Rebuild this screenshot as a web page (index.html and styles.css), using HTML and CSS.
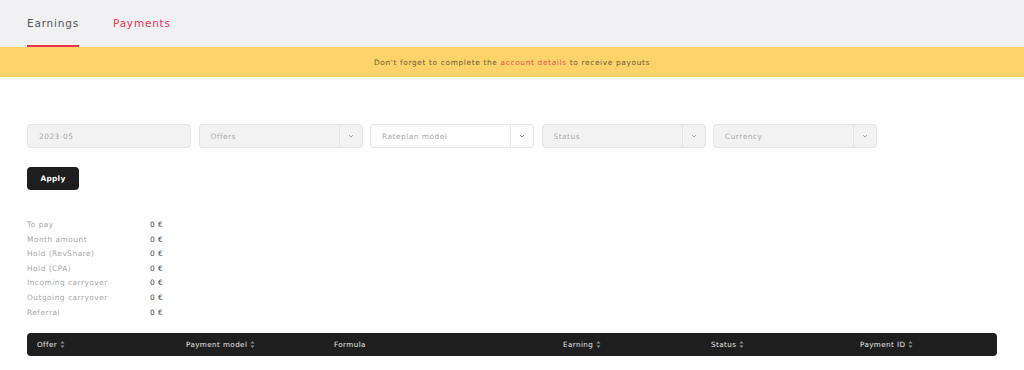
FILE: index.html
```html
<!DOCTYPE html>
<html lang="en">
<head>
  <meta charset="UTF-8" />
  <title>Earnings</title>
  <link rel="stylesheet" href="styles.css">
</head>
<body>

  <nav class="tabs">
    <a class="tab active">Earnings</a>
    <a class="tab">Payments</a>
  </nav>

  <div class="notice">
    Don't forget to complete the <a class="notice-link">account details</a> to receive payouts
  </div>

  <main class="content">
    <div class="filters">
      <div class="field">2023-05</div>
      <div class="field select">
        <span>Offers</span>
        <span class="arrow"><svg width="6" height="4" viewBox="0 0 6 4"><path d="M1 1l2 2 2-2" fill="none" stroke="#999" stroke-width="0.9"/></svg></span>
      </div>
      <div class="field select white">
        <span>Rateplan model</span>
        <span class="arrow"><svg width="6" height="4" viewBox="0 0 6 4"><path d="M1 1l2 2 2-2" fill="none" stroke="#777" stroke-width="0.9"/></svg></span>
      </div>
      <div class="field select">
        <span>Status</span>
        <span class="arrow"><svg width="6" height="4" viewBox="0 0 6 4"><path d="M1 1l2 2 2-2" fill="none" stroke="#999" stroke-width="0.9"/></svg></span>
      </div>
      <div class="field select">
        <span>Currency</span>
        <span class="arrow"><svg width="6" height="4" viewBox="0 0 6 4"><path d="M1 1l2 2 2-2" fill="none" stroke="#999" stroke-width="0.9"/></svg></span>
      </div>
    </div>

    <button class="btn">Apply</button>

    <dl class="summary">
      <dt>To pay</dt><dd>0 €</dd>
      <dt>Month amount</dt><dd>0 €</dd>
      <dt>Hold (RevShare)</dt><dd>0 €</dd>
      <dt>Hold (CPA)</dt><dd>0 €</dd>
      <dt>Incoming carryover</dt><dd>0 €</dd>
      <dt>Outgoing carryover</dt><dd>0 €</dd>
      <dt>Referral</dt><dd>0 €</dd>
    </dl>

    <div class="table-head">
      <span>Offer <svg class="sort" width="5" height="9" viewBox="0 0 5 9"><path d="M2.5 1L4.5 3.5H0.5z M2.5 8L4.5 5.5H0.5z" fill="#8a8a8a"/></svg></span>
      <span>Payment model <svg class="sort" width="5" height="9" viewBox="0 0 5 9"><path d="M2.5 1L4.5 3.5H0.5z M2.5 8L4.5 5.5H0.5z" fill="#8a8a8a"/></svg></span>
      <span>Formula</span>
      <span>Earning <svg class="sort" width="5" height="9" viewBox="0 0 5 9"><path d="M2.5 1L4.5 3.5H0.5z M2.5 8L4.5 5.5H0.5z" fill="#8a8a8a"/></svg></span>
      <span>Status <svg class="sort" width="5" height="9" viewBox="0 0 5 9"><path d="M2.5 1L4.5 3.5H0.5z M2.5 8L4.5 5.5H0.5z" fill="#8a8a8a"/></svg></span>
      <span>Payment ID <svg class="sort" width="5" height="9" viewBox="0 0 5 9"><path d="M2.5 1L4.5 3.5H0.5z M2.5 8L4.5 5.5H0.5z" fill="#8a8a8a"/></svg></span>
    </div>
  </main>

</body>
</html>
```

FILE: styles.css
```css
body {
  margin: 0;
  font-family: "DejaVu Sans", Verdana, sans-serif;
  color: #1e1e1e;
  background: #fff;
}

.tabs {
  display: flex;
  gap: 34px;
  height: 47px;
  padding: 0 27px;
  background: #f1f1f4;
  box-sizing: border-box;
}

.tab {
  display: flex;
  align-items: center;
  height: 45px;
  font-size: 10.5px;
  letter-spacing: 0.8px;
  border-bottom: 2px solid transparent;
}

.tab.active {
  color: #555;
  border-bottom-color: #e8344e;
}

.tab:not(.active) {
  color: #e8344e;
}

.notice {
  height: 30px;
  line-height: 31px;
  background: #fed46a;
  text-align: center;
  font-size: 7.4px;
  letter-spacing: 0.65px;
  color: #6a5a3a;
}

.notice-link {
  color: #e8534e;
}

.content {
  padding: 47px 27px 0;
}

.filters {
  display: flex;
  gap: 7.5px;
}

.field {
  display: flex;
  align-items: center;
  justify-content: space-between;
  width: 164px;
  height: 24px;
  box-sizing: border-box;
  padding-left: 11px;
  border: 1px solid #e4e4e4;
  border-radius: 4px;
  background: #f3f3f3;
  font-size: 7.4px;
  letter-spacing: 0.5px;
  color: #a8a8a8;
}

.field.white {
  background: #fff;
}

.arrow {
  display: flex;
  align-items: center;
  justify-content: center;
  width: 22px;
  height: 100%;
  border-left: 1px solid #e4e4e4;
}

.btn {
  display: block;
  margin-top: 19px;
  width: 52px;
  height: 23px;
  border: none;
  border-radius: 4px;
  background: #1e1e1e;
  color: #fff;
  font-family: inherit;
  font-size: 7.4px;
  font-weight: 700;
  letter-spacing: 0.3px;
}

.summary {
  display: grid;
  grid-template-columns: 123px auto;
  row-gap: 6.6px;
  margin: 31px 0 0;
  font-size: 7.4px;
  line-height: 8px;
  letter-spacing: 0.5px;
}

.summary dt {
  color: #a8a8a8;
}

.summary dd {
  margin: 0;
  color: #444;
}

.table-head {
  display: grid;
  grid-template-columns: 149px 148px 229px 148px 149px auto;
  align-items: center;
  height: 23px;
  margin-top: 16px;
  padding-left: 10px;
  border-radius: 4px;
  background: #1e1e1e;
  color: #e8e8e8;
  font-size: 7.2px;
  letter-spacing: 0.4px;
}

.table-head span {
  display: flex;
  align-items: center;
  gap: 3px;
}
```
